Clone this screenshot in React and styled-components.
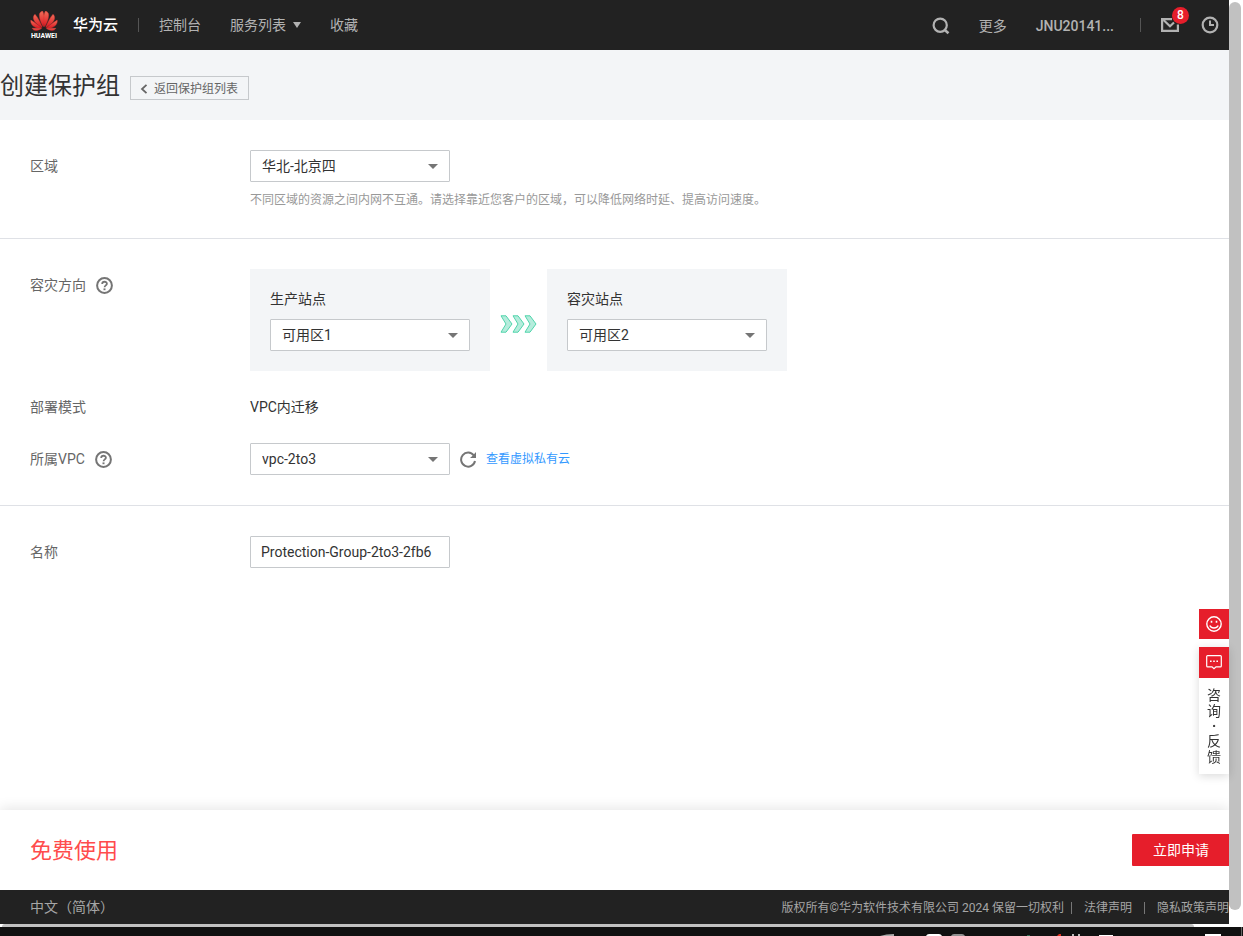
import React from 'react'
import styled, { createGlobalStyle } from 'styled-components'

const GlobalStyle = createGlobalStyle`
  * {
    box-sizing: border-box;
  }

  body {
    margin: 0;
    background: #fff;
    color: #333;
    font-family: Roboto, "Noto Sans CJK SC", sans-serif;
    font-size: 14px;
    line-height: 20px;
  }

  button, input, select {
    font: inherit;
    color: inherit;
  }
`

const Screen = styled.div`
  display: flex;
  flex-direction: column;
  height: 100vh;
  overflow: hidden;
`

const Viewport = styled.div`
  display: flex;
  flex: 1;
  min-height: 0;
`

const Page = styled.div`
  display: flex;
  flex-direction: column;
  flex: 1;
  min-width: 0;
`

const ScrollTrack = styled.div`
  width: 14px;
  padding: 2px 2px 17px 0;
  background: #fff;
`

const ScrollThumb = styled.div`
  height: 100%;
  border-radius: 6px;
  background: #c1c1c1;
`

const BottomTrack = styled.div`
  height: 3px;
  padding: 0 35px 0 2px;
  background: #fff;
`

const BottomThumb = styled.div`
  height: 100%;
  border-radius: 3px 3px 0 0;
  background: #c1c1c1;
`

const TopBar = styled.header`
  display: flex;
  align-items: center;
  flex: none;
  height: 50px;
  padding: 0 10px 0 30px;
  background: #222;
  color: #b2b2b2;
`

const Brand = styled.a`
  display: flex;
  align-items: center;
  gap: 15px;
  color: #fff;
  font-size: 15px;
  font-weight: 500;
  text-decoration: none;
`

const Divider = styled.span`
  width: 1px;
  height: 14px;
  margin: 0 20px;
  background: #555;
`

const Menu = styled.nav`
  display: flex;
  gap: 29px;
`

const MenuLink = styled.a`
  display: flex;
  align-items: center;
  gap: 7px;
  color: #b2b2b2;
  font-weight: ${props => props.$strong ? 500 : 400};
  text-decoration: none;
`

const Tools = styled.div`
  display: flex;
  align-items: center;
  margin-left: auto;
`

const ToolLinks = styled.div`
  display: flex;
  align-items: center;
  gap: 29px;
  margin-right: 6px;
  padding-top: 2px;
`

const IconButton = styled.button`
  position: relative;
  display: flex;
  padding: 0;
  border: 0;
  background: none;
  color: ${props => props.color || '#b2b2b2'};
  cursor: pointer;
`

const Alerts = styled.div`
  display: flex;
  align-items: center;
  gap: 22px;
`

const Badge = styled.span`
  position: absolute;
  top: -11px;
  right: -10px;
  width: 17px;
  height: 17px;
  border-radius: 9px;
  background: #e61e2b;
  color: #fff;
  font-size: 12px;
  font-weight: 500;
  line-height: 17px;
  text-align: center;
`

const TitleBar = styled.div`
  display: flex;
  align-items: center;
  flex: none;
  gap: 10px;
  height: 70px;
  background: #f3f5f7;
`

const Title = styled.h1`
  margin: 0;
  padding-top: 2px;
  font-size: 24px;
  font-weight: 400;
  line-height: 30px;
`

const BackButton = styled.button`
  display: flex;
  align-items: center;
  gap: 6px;
  height: 24px;
  margin-top: 6px;
  padding: 1px 10px 0 9px;
  border: 1px solid #c6c9cc;
  background: none;
  color: #666;
  font-size: 12px;
  cursor: pointer;
`

const Form = styled.form`
  flex: 1;
  min-height: 0;
`

const Section = styled.section`
  display: flex;
  flex-direction: column;
  padding: 30px;
  border-bottom: ${props => props.$last ? 0 : '1px solid #dfe1e6'};
`

const Field = styled.div`
  display: grid;
  grid-template-columns: 220px 1fr;
  margin-bottom: ${props => props.$gap || 0}px;
`

const FieldLabel = styled.div`
  display: flex;
  align-items: center;
  gap: 10px;
  height: 32px;
  color: #666;
`

const Value = styled.div`
  display: flex;
  align-items: center;
  gap: 10px;
  height: 32px;
`

const Hint = styled.p`
  margin: 10px 0 0;
  color: #999;
  font-size: 12px;
  line-height: 16px;
`

const SelectBox = styled.div`
  display: grid;
  align-items: center;
  width: 200px;

  > * {
    grid-area: 1 / 1;
  }

  > svg {
    justify-self: end;
    margin-right: 12px;
    pointer-events: none;
  }
`

const Select = styled.select`
  width: 100%;
  height: 32px;
  padding: 0 11px;
  border: 1px solid #c6c9cc;
  border-radius: 1px;
  background: #fff;
  appearance: none;
`

const TextInput = styled.input`
  width: 200px;
  height: 32px;
  padding: 0 10px;
  border: 1px solid #c6c9cc;
  border-radius: 1px;
`

const Direction = styled.div`
  display: flex;
  align-items: center;
  gap: 10px;

  > svg {
    margin-top: 8px;
  }
`

const Site = styled.div`
  display: flex;
  flex-direction: column;
  gap: 10px;
  padding: 20px;
  background: #f3f5f7;
`

const SmallLink = styled.a`
  color: #3399ff;
  font-size: 12px;
  text-decoration: none;
`

const FeeBar = styled.div`
  display: flex;
  align-items: center;
  justify-content: space-between;
  flex: none;
  height: 80px;
  padding-left: 30px;
  background: #fff;
  box-shadow: 0 -2px 12px rgba(0, 0, 0, 0.1);
`

const Fee = styled.span`
  padding-top: 2px;
  color: #ff4c4c;
  font-size: 22px;
  line-height: 30px;
`

const ApplyButton = styled.button`
  height: 32px;
  padding: 0 20px 0 21px;
  border: 0;
  border-radius: 1px 0 0 1px;
  background: #e61e2b;
  color: #fff;
  cursor: pointer;
`

const Footer = styled.footer`
  display: flex;
  align-items: center;
  justify-content: space-between;
  flex: none;
  height: 34px;
  padding-left: 30px;
  background: #222;
  color: #a6a6a6;
`

const Legal = styled.div`
  display: flex;
  align-items: center;
  padding-top: 2px;
  font-size: 12px;
  white-space: nowrap;
`

const LegalLink = styled.a`
  margin-left: 12px;
  padding-left: 12px;
  border-left: 1px solid #777;
  color: inherit;
  line-height: 12px;
  text-decoration: none;

  &:first-of-type {
    margin-left: 7px;
  }
`

const SideTools = styled.aside`
  position: fixed;
  right: 14px;
  bottom: 162px;
  display: flex;
  flex-direction: column;
  gap: 8px;
  width: 30px;
`

const SideButton = styled.button`
  display: flex;
  align-items: center;
  justify-content: center;
  width: 30px;
  height: ${props => props.$tall ? 31 : 30}px;
  padding: 0;
  border: 0;
  background: #e61e2b;
  color: #fff;
  cursor: pointer;
`

const Feedback = styled.div`
  background: #fff;
  box-shadow: 0 2px 10px rgba(0, 0, 0, 0.15);
`

const FeedbackText = styled.div`
  display: flex;
  flex-direction: column;
  align-items: center;
  padding: 9px 0;
  line-height: 16px;

  span:nth-child(3) {
    height: 14px;
    font-weight: 700;
    line-height: 14px;
  }
`

const Taskbar = styled.div`
  display: flex;
  flex: none;
  justify-content: flex-end;
  height: 9px;
  background: #101010;
`

const petals = [
  'M12.6 0C10.6 .5 9.4 2 9.3 4c0 4 2.2 8.5 3.9 11.5.3 0 .4-.1.4-.3C14.4 10 14.7 3.5 12.6 0Z',
  'M5 3.2C3.5 4.6 3 6.3 3.6 8.3c1.1 3.300 5.1 6.3 8.3 8.1.2 0 .3-.2.2-.4C10.3 11.5 8 6.4 5 3.2Z',
  'M.8 9.1C.2 13.1 3.2 15.6 6.2 16.7c2 .6 4 .7 5.3.6.2-.1.2-.3 0-.4C8.2 14.3 4.3 11.2.8 9.1Z',
  'M2.1 17.3c1.6 2.7 4.4 2.5 6.3 1.7 1-.4 2-.9 2.8-1.3.1-.2 0-.3-.2-.3Z'
]

const HuaweiLogo = () =>
  <svg width='28' height='29' viewBox='0 0 28 29' aria-hidden='true'>
    <defs>
      <linearGradient id='petal' x1='0' y1='0' x2='0' y2='1'>
        <stop offset='0' stopColor='#f0705a' />
        <stop offset='1' stopColor='#dc1420' />
      </linearGradient>
    </defs>
    <g fill='url(#petal)' stroke='#e03030' strokeWidth='.4'>
      {petals.map(d => <path key={d} d={d} />)}
      <g transform='matrix(-1 0 0 1 28 0)'>
        {petals.map(d => <path key={d} d={d} />)}
      </g>
    </g>
    <text x='14' y='27' textAnchor='middle' fill='#fff' fontFamily='Roboto, sans-serif' fontSize='7' fontWeight='700'>HUAWEI</text>
  </svg>

const SearchIcon = () =>
  <svg width='18' height='18' viewBox='0 0 18 18' fill='none' stroke='currentColor' strokeWidth='2.2'>
    <circle cx='8.2' cy='8.2' r='6.6' />
    <path d='m12.8 13 3.7 3.2' strokeWidth='2.6' />
  </svg>

const MailIcon = () =>
  <svg width='18' height='14' viewBox='0 0 18 14' fill='none' stroke='currentColor' strokeWidth='2.2'>
    <path d='M11 1.1H1.1v11.8h15.8V6.500' />
    <path d='m2.500 2 6.500 6.200L13 4.500' />
  </svg>

const ClockIcon = () =>
  <svg width='18' height='18' viewBox='0 0 18 18' fill='none' stroke='currentColor' strokeWidth='2.2'>
    <circle cx='9' cy='9' r='7.300' />
    <path d='M9 4.500V9h4' strokeWidth='2' />
  </svg>

const HelpIcon = () =>
  <svg width='17' height='17' viewBox='0 0 17 17' fill='none' stroke='currentColor' strokeWidth='2'>
    <circle cx='8.5' cy='8.5' r='7.4' />
    <path d='M6.200 7c0-3 4.700-2.900 4.700-.2 0 1.500-2.300 1.700-2.300 3.400' strokeWidth='1.800' />
    <path d='M8.500 11.400v1.800' />
  </svg>

const RefreshIcon = () =>
  <svg width='16' height='17' viewBox='0 0 16 17' fill='none' stroke='currentColor' strokeWidth='2'>
    <path d='M13.800 4.500A7 7 0 1 0 15 10' />
    <path d='M16 1v6h-6l2.300-2Z' fill='currentColor' stroke='none' />
  </svg>

const Caret = ({ width = 10, height = 5, color = '#757575' }) =>
  <svg width={width} height={height} viewBox='0 0 10 5' preserveAspectRatio='none' fill={color}>
    <path d='M0 0h10L5 5Z' />
  </svg>

const Arrows = () =>
  <svg width='37' height='18' viewBox='0 0 37 18' fill='#b5ecdc' stroke='#50d4ab'>
    {[1, 13, 25].map(x =>
      <path key={x} d={`M${x} .8h5l6 8.2-6 8.2h-5l5-8.2Z`} />
    )}
  </svg>

const SmileIcon = () =>
  <svg width='16' height='16' viewBox='0 0 16 16' fill='none' stroke='currentColor' strokeWidth='1.4'>
    <circle cx='8' cy='8' r='7.2' />
    <path d='M3.800 9.500c1.500 3.400 6.900 3.400 8.400 0' />
    <path d='M5.500 4.800v2M10.500 4.800v2' strokeWidth='1.6' />
  </svg>

const ChatIcon = () =>
  <svg width='16' height='15' viewBox='0 0 16 15' fill='none' stroke='currentColor' strokeWidth='1.2'>
    <path d='M1.6.7h12.8q.9 0 .9.9v9.3q0 .9-.9.9H10l-2 1.9-2-1.900H1.6q-.9 0-.9-.9V1.6q0-.9.9-.9Z' />
    <path d='M4 6.200h1.600M7.200 6.200h1.600M10.400 6.200H12' strokeWidth='1.6' />
  </svg>

// only the tops of the taskbar icons are visible
const TaskbarIcons = () =>
  <svg width='383' height='9' viewBox='0 0 383 9' aria-hidden='true'>
    <path d='M20 9q6-2 14-2v2Z' fill='#aaa' />
    <path d='M66 9q1-2 3-2h10q2 0 3 2Z' fill='#fff' />
    <path d='M91 9q1-2 3-2h8q2 0 3 2Z' fill='#909090' />
    <path d='M167 8h3v1h-3Z' fill='#2f6b50' />
    <path d='m197 9 2-2h2v2Z' fill='#e0301e' />
    <path d='M212 7h2v2h-2ZM218 7h2v2h-2Z' fill='#bbb' />
    <path d='M239 8h14v1h-14ZM345 7h16v2h-16Z' fill='#fff' />
    <path d='M381 0h1v9h-1Z' fill='#666' />
  </svg>

const Dropdown = ({ id, children }) =>
  <SelectBox>
    <Select id={id}>
      <option>{children}</option>
    </Select>
    <Caret />
  </SelectBox>

const Help = () =>
  <IconButton type='button' color='#757575' aria-label='帮助'><HelpIcon /></IconButton>

const App = () =>
  <Screen>
    <GlobalStyle />
    <Viewport>
      <Page>
        <TopBar>
          <Brand href='#'><HuaweiLogo />华为云</Brand>
          <Divider />
          <Menu>
            <MenuLink href='#'>控制台</MenuLink>
            <MenuLink href='#'>服务列表 <Caret width={8} height={6} color='#b2b2b2' /></MenuLink>
            <MenuLink href='#'>收藏</MenuLink>
          </Menu>
          <Tools>
            <ToolLinks>
              <IconButton aria-label='搜索'><SearchIcon /></IconButton>
              <MenuLink href='#'>更多</MenuLink>
              <MenuLink href='#' $strong>JNU20141...</MenuLink>
            </ToolLinks>
            <Divider />
            <Alerts>
              <IconButton aria-label='消息'><MailIcon /><Badge>8</Badge></IconButton>
              <IconButton aria-label='历史'><ClockIcon /></IconButton>
            </Alerts>
          </Tools>
        </TopBar>

        <TitleBar>
          <Title>创建保护组</Title>
          <BackButton>
            <svg width='8' height='10' viewBox='0 0 8 10' fill='none' stroke='#666' strokeWidth='1.8'>
              <path d='M6.500.8 2 5l4.500 4.200' />
            </svg>
            返回保护组列表
          </BackButton>
        </TitleBar>

        <Form>
          <Section>
            <Field>
              <FieldLabel as='label' htmlFor='region'>区域</FieldLabel>
              <div>
                <Dropdown id='region'>华北-北京四</Dropdown>
                <Hint>不同区域的资源之间内网不互通。请选择靠近您客户的区域，可以降低网络时延、提高访问速度。</Hint>
              </div>
            </Field>
          </Section>

          <Section>
            <Field $gap={20}>
              <FieldLabel>容灾方向 <Help /></FieldLabel>
              <Direction>
                <Site>
                  <label htmlFor='source'>生产站点</label>
                  <Dropdown id='source'>可用区1</Dropdown>
                </Site>
                <Arrows />
                <Site>
                  <label htmlFor='target'>容灾站点</label>
                  <Dropdown id='target'>可用区2</Dropdown>
                </Site>
              </Direction>
            </Field>
            <Field $gap={20}>
              <FieldLabel>部署模式</FieldLabel>
              <Value>VPC内迁移</Value>
            </Field>
            <Field>
              <FieldLabel><label htmlFor='vpc'>所属VPC</label> <Help /></FieldLabel>
              <Value>
                <Dropdown id='vpc'>vpc-2to3</Dropdown>
                <IconButton type='button' color='#757575' aria-label='刷新'><RefreshIcon /></IconButton>
                <SmallLink href='#'>查看虚拟私有云</SmallLink>
              </Value>
            </Field>
          </Section>

          <Section $last>
            <Field>
              <FieldLabel as='label' htmlFor='name'>名称</FieldLabel>
              <TextInput id='name' defaultValue='Protection-Group-2to3-2fb6' />
            </Field>
          </Section>
        </Form>

        <FeeBar>
          <Fee>免费使用</Fee>
          <ApplyButton>立即申请</ApplyButton>
        </FeeBar>
        <Footer>
          <span>中文（简体）</span>
          <Legal>
            版权所有©华为软件技术有限公司 2024 保留一切权利
            <LegalLink href='#'>法律声明</LegalLink>
            <LegalLink href='#'>隐私政策声明</LegalLink>
          </Legal>
        </Footer>
        <BottomTrack><BottomThumb /></BottomTrack>
      </Page>
      <ScrollTrack><ScrollThumb /></ScrollTrack>
    </Viewport>

    <Taskbar><TaskbarIcons /></Taskbar>

    <SideTools>
      <SideButton aria-label='满意度'><SmileIcon /></SideButton>
      <Feedback>
        <SideButton $tall aria-label='咨询反馈'><ChatIcon /></SideButton>
        <FeedbackText>
          <span>咨</span>
          <span>询</span>
          <span>·</span>
          <span>反</span>
          <span>馈</span>
        </FeedbackText>
      </Feedback>
    </SideTools>
  </Screen>

export default App
